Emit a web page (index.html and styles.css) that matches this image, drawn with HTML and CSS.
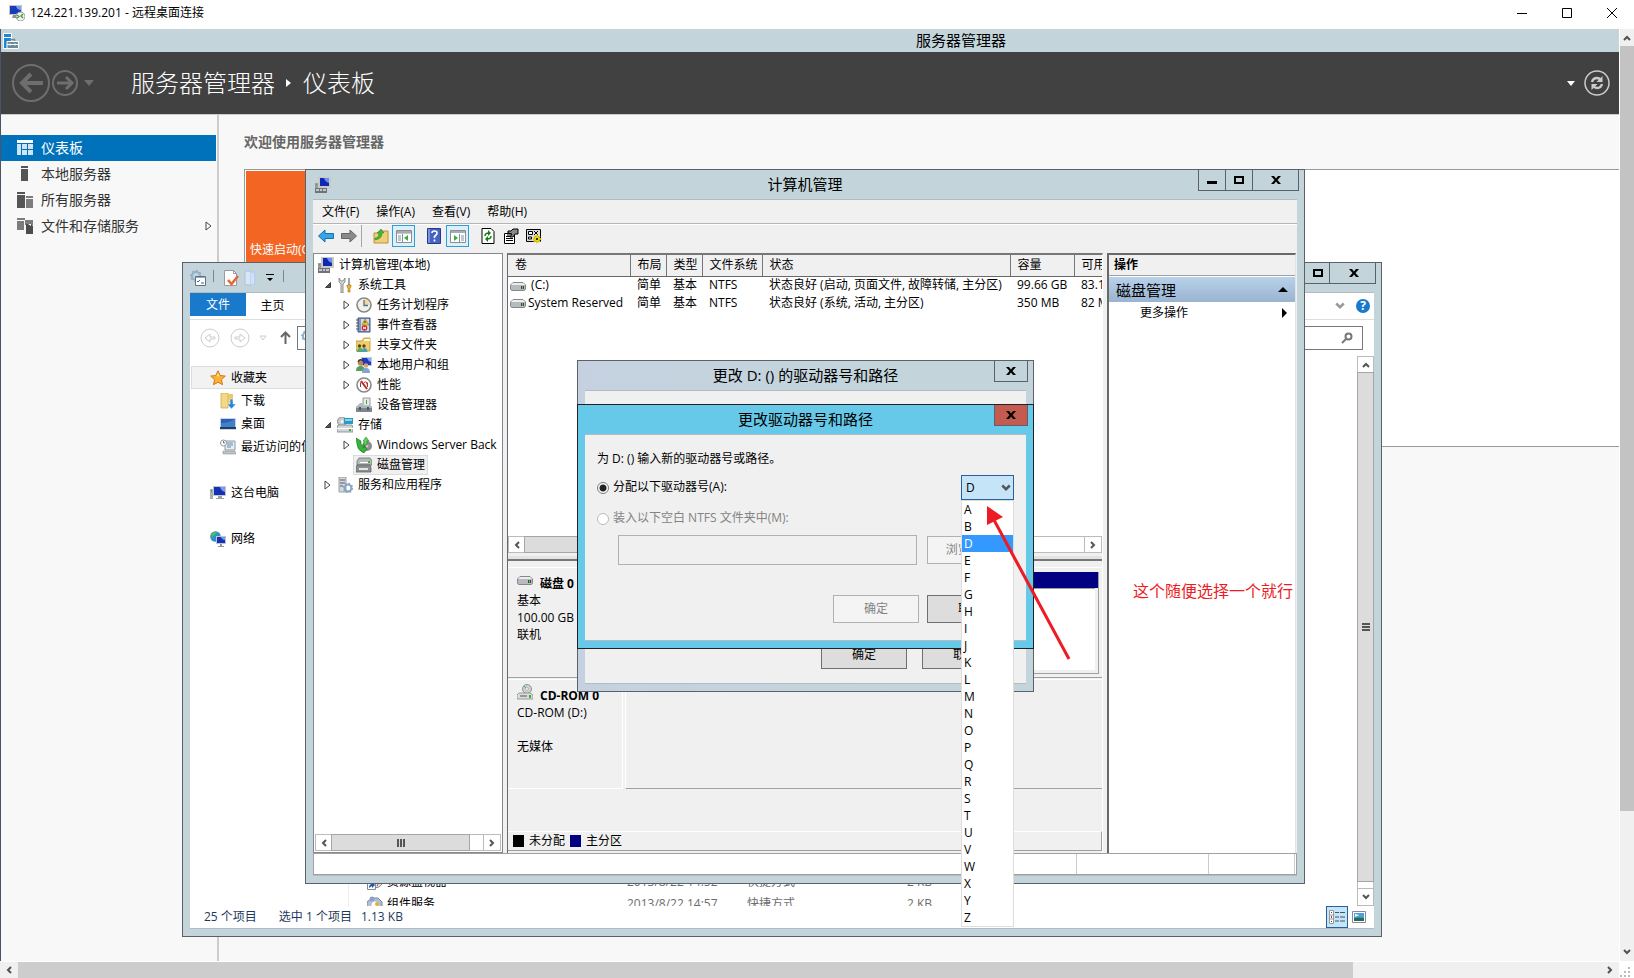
FILE: index.html
```
<!DOCTYPE html>
<html lang="zh-CN">
<head>
  <meta charset="UTF-8" />
  <meta name="viewport" content="width=device-width, initial-scale=1.0" />
  <title>124.221.139.201 - 远程桌面连接</title>
  <link rel="stylesheet" href="styles.css">
</head>
<body>
  <!-- shared icons -->
  <svg class="sprite" aria-hidden="true">
    <symbol id="i-pc" viewBox="0 0 16 16">
      <path d="M0 6h3v5H0z" fill="#9a9a9a" /><path d="M1 7h1v1H1z" fill="#3a3" />
      <path d="M3 0h13v11H3z" fill="#c9c9c4" /><path d="M5 1h9v8H5z" fill="#1226b4" />
      <path d="M9 1h5v5q-4-1-5-5z" fill="#6f8df2" />
      <path d="M0 11h12v5H0z" fill="#6f7478" /><path d="M1 12h3v2H1zM5 12h2v2H5zM8 12h3v2H8z" fill="#c4c8ca" />
    </symbol>
    <symbol id="i-monitor" viewBox="0 0 16 16">
      <path d="M0 4h3v10H0z" fill="#a7b0b6" /><path d="M1 5h1v2H1z" fill="#4a4" />
      <path d="M3 1h13v10H3z" fill="#c2c8cc" /><path d="M4 2h11v8H4z" fill="#1530b8" />
      <path d="M10 2h5v5q-4-1-5-5z" fill="#7c9bf0" /><path d="M8 11h4v2h2v1H6v-1h2z" fill="#9aa2a6" />
    </symbol>
    <symbol id="i-rdp" viewBox="0 0 16 16">
      <path d="M0 0h13v10H0z" fill="#c3c8cc" /><path d="M1 1h11v8H1z" fill="#1a3cb8" /><path d="M7 1h5v4q-4 0-5-4z" fill="#7ba0f0" />
      <path d="M4 10h4v3H3z" fill="#8d9499" /><circle cx="11.500" cy="11.500" r="4.500" fill="#eef2ee" stroke="#999" />
      <path d="M8 10l2 1.500L8 13M14 9l-2 2 2 2" fill="none" stroke="#3a9a3a" stroke-width="1.300" />
    </symbol>
    <symbol id="i-server" viewBox="0 0 16 16">
      <path d="M.5.500h8v15h-8z" fill="#1b87d6" stroke="#fff" /><path d="M1 4h7v1H1z" fill="#fff" />
      <path d="M4 8.500h11.500v7H4z" fill="#6d8b9b" stroke="#fff" /><path d="M7.500 8V6.500h4V8" fill="none" stroke="#6d8b9b" stroke-width="1.500" />
      <path d="M4 11.500h11M7 10.500v2M12 10.500v2" stroke="#fff" />
    </symbol>
    <symbol id="i-tools" viewBox="0 0 16 16">
      <path d="M2 1v4l2 2v9h2V7l2-2V1L6 4H4z" fill="#d4d8da" stroke="#777" stroke-width=".8" />
      <path d="M11 1h2v7h-2z" fill="#a5a5a5" /><path d="M10 8h4v2l-1 1v4h-2v-4l-1-1z" fill="#efb02c" stroke="#a87414" stroke-width=".6" />
    </symbol>
    <symbol id="i-clock" viewBox="0 0 16 16">
      <circle cx="8" cy="8" r="7" fill="#f1f1ec" stroke="#888" stroke-width="1.600" /><path d="M8 8V2a6 6 0 0 1 6 6z" fill="#f5d69a" />
      <path d="M8 3v5.500h4" fill="none" stroke="#52718c" stroke-width="1.300" />
    </symbol>
    <symbol id="i-event" viewBox="0 0 16 16">
      <path d="M2 1h12v14H2z" fill="#7f98c4" stroke="#41547c" /><path d="M5 2h8v12H5z" fill="#cfdaf0" />
      <path d="M0 3h3M0 6h3M0 9h3M0 12h3" stroke="#555" /><path d="M9 2l4 6H6z" fill="#f1c730" stroke="#8b6b00" stroke-width=".6" />
      <path d="M9 4v2" stroke="#222" /><circle cx="8.500" cy="11" r="2.800" fill="#d42020" /><path d="M7 10l3 2M10 10l-3 2" stroke="#fff" />
    </symbol>
    <symbol id="i-share" viewBox="0 0 16 16">
      <path d="M0 4h6l2-3h6v13H0z" fill="#f0cf6a" stroke="#b78f31" stroke-width=".8" /><path d="M8 2h6v2H8z" fill="#fff7d7" />
      <circle cx="3.500" cy="9" r="1.700" fill="#5b432a" /><circle cx="8" cy="9" r="1.700" fill="#5b432a" />
      <path d="M1 15q0-4 3-4t3 4z" fill="#58a868" /><path d="M6 15q0-4 2.500-4t3 4z" fill="#4aa0b8" />
    </symbol>
    <symbol id="i-users" viewBox="0 0 16 16">
      <path d="M5 0h11v9H5z" fill="#c6cbd0" /><path d="M6 1h9v7H6z" fill="#1b3cc0" /><path d="M11 1h4v4q-3-1-4-4z" fill="#86a4f4" />
      <circle cx="4.500" cy="6" r="2.700" fill="#b98a55" /><path d="M2 5q2-4 5-1" stroke="#44311c" fill="none" stroke-width="1.500" /><path d="M0 14q0-5 4.500-5T9 14z" fill="#5b9b5b" />
      <circle cx="10" cy="8.500" r="2.300" fill="#d7a46e" /><path d="M6 16q0-5 4-5t4 5z" fill="#7ea5d6" />
    </symbol>
    <symbol id="i-perf" viewBox="0 0 16 16">
      <circle cx="8" cy="8" r="7" fill="#fff" stroke="#888" stroke-width="1.600" /><path d="M4.500 10V5.500M11.500 5.500V10" fill="none" stroke="#555" />
      <path d="M5 4l6 8" stroke="#d02020" stroke-width="2" /><path d="M8 5.500q3-2 3 2" fill="none" stroke="#d02020" />
    </symbol>
    <symbol id="i-device" viewBox="0 0 16 16">
      <path d="M7 1h7v8H7z" fill="#e6e8e6" stroke="#999" /><path d="M10 3h1v4h-1z" fill="#46a546" />
      <path d="M1 9l3-3h4v3z" fill="#b6bbbf" /><path d="M0 9h16v6H0z" fill="#7b858c" /><path d="M0 9h16v2H0z" fill="#aeb6ba" /><path d="M3 10h2v3H3zM11 10h2v3h-2z" fill="#4d565b" />
    </symbol>
    <symbol id="i-storage" viewBox="0 0 16 16">
      <circle cx="5" cy="4.500" r="4.500" fill="#c9cccc" stroke="#8b8f90" /><circle cx="5" cy="4.500" r="1.300" fill="#fff" />
      <path d="M7 1h9v6H7z" fill="#2b9bc4" /><path d="M8 2h7v2H8z" fill="#88d4ec" />
      <path d="M1 8h14l1 3v4H0v-4z" fill="#d2d5d7" stroke="#7d8386" stroke-width=".8" /><path d="M0 11.500h16" stroke="#fff" /><path d="M12 12h2v2h-2z" fill="#3cae32" />
    </symbol>
    <symbol id="i-backup" viewBox="0 0 16 16">
      <circle cx="11" cy="9" r="5" fill="#8c8c8c" /><circle cx="11" cy="9" r="1.500" fill="#e6c0c0" />
      <path d="M0 1l5 3v3l3 4V8l3 4-3 4-2-1q-5-3-5-8z" fill="#33b43a" stroke="#167319" stroke-width=".6" /><path d="M7 4l3-4 3 4h-2v4H8V4z" fill="#5fd25f" stroke="#167319" stroke-width=".5" />
    </symbol>
    <symbol id="i-disks" viewBox="0 0 16 16">
      <path d="M3 1h11l2 3v4H1V4z" fill="#b5b9ba" stroke="#6a6e70" stroke-width=".8" /><path d="M4 5h8v1H4z" fill="#fff" /><path d="M12 4h2v2h-2z" fill="#3cae32" />
      <path d="M1 8h13l1 3v4H0v-4z" fill="#8b8f91" stroke="#5c6062" stroke-width=".8" /><path d="M3 11h9v2H3z" fill="#e5e7e7" />
    </symbol>
    <symbol id="i-services" viewBox="0 0 16 16">
      <path d="M2 0h7v15H2z" fill="#d5d9dc" stroke="#858b8f" stroke-width=".8" /><path d="M3 3h5M3 6h5M3 9h3" stroke="#557" />
      <circle cx="11" cy="11" r="3.400" fill="none" stroke="#88a5c5" stroke-width="2" /><circle cx="11" cy="11" r="4.500" fill="none" stroke="#88a5c5" stroke-width="1.500" stroke-dasharray="1.700 1.800" />
    </symbol>
    <symbol id="i-drive" viewBox="0 0 16 9">
      <path d="M3 .5h10l2.500 2.500v4l-1 1.500h-13L.5 7V3z" fill="#b8babd" stroke="#85878b" /><path d="M3 1h10l2 2H1z" fill="#ededf0" /><path d="M11 4h3v3h-3z" fill="#444" /><path d="M12 4h1v3h-1z" fill="#4dcb3b" />
    </symbol>
    <symbol id="i-cd" viewBox="0 0 16 16">
      <circle cx="10" cy="5" r="4.500" fill="#cfd2d2" stroke="#8e9292" /><circle cx="10" cy="5" r="1.400" fill="#fff" stroke="#999" stroke-width=".6" /><path d="M7 2l2 2" stroke="#4b4" />
      <path d="M2 9h11l3 2v4H0v-4z" fill="#dadcdd" stroke="#85898b" stroke-width=".8" /><path d="M3 12h7" stroke="#555" /><path d="M12 11h2v3h-2z" fill="#3cae32" />
    </symbol>
    <symbol id="i-star" viewBox="0 0 16 16">
      <path d="M8 .8l2.200 4.700 5.100.6-3.800 3.500 1 5.100L8 12.200l-4.500 2.500 1-5.100L.7 6.100l5.100-.6z" fill="#f9b233" stroke="#cf7a1c" />
      <path d="M8 3l1.300 3.300H6.700z" fill="#fde5a8" />
    </symbol>
    <symbol id="i-down" viewBox="0 0 16 16">
      <path d="M1 0h7v15H1z" fill="#f3d888" stroke="#c9a54c" stroke-width=".7" /><path d="M8 1h5v12H8z" fill="#ecc766" /><path d="M10 6h3v5h3l-4.500 5L7 11h3z" fill="#2a86d8" stroke="#fff" stroke-width=".5" />
    </symbol>
    <symbol id="i-desk" viewBox="0 0 16 16">
      <path d="M0 2h16v12H0z" fill="#c9d4df" /><path d="M1 3h14v8H1z" fill="#2862b8" /><path d="M1 7q8 0 14-4v8H1z" fill="#447fcc" /><path d="M0 11h16v2H0z" fill="#21405f" />
    </symbol>
    <symbol id="i-recent" viewBox="0 0 16 16">
      <path d="M5 2h10v9H5z" fill="#e8edf0" stroke="#8f999f" /><path d="M7 4h6M7 6h6M7 8h4" stroke="#5f8cb4" /><path d="M3 12h12l1 3H3z" fill="#bcc4c8" stroke="#8f999f" stroke-width=".6" />
      <circle cx="3.500" cy="4" r="3" fill="#fff" stroke="#8f999f" /><path d="M3.500 2v2h1.500" fill="none" stroke="#555" stroke-width=".8" />
    </symbol>
    <symbol id="i-net" viewBox="0 0 16 16">
      <circle cx="5.500" cy="5.500" r="5.300" fill="#2d8fd0" /><path d="M1 3q3-3 6-2L5 4 3 5v3zM7 6l3-2v4L7 10z" fill="#4fbd53" />
      <path d="M6 5h10v8H6z" fill="#bfc7cd" /><path d="M7 6h8v6H7z" fill="#1631b4" /><path d="M11 6h4v3q-3 0-4-3z" fill="#7797ee" /><path d="M10 13h2v2h2v1H8v-1h2z" fill="#8f979b" />
    </symbol>
    <symbol id="i-opts" viewBox="0 0 16 16">
      <circle cx="6" cy="6" r="4" fill="none" stroke="#8fb3cf" stroke-width="2" /><circle cx="6" cy="6" r="5.300" fill="none" stroke="#7c98ae" stroke-dasharray="2 2" />
      <path d="M5.500 6.500h10v9h-10z" fill="#fff" stroke="#66727a" /><path d="M6 7h9v1H6z" fill="#9ab" /><path d="M7 11l1 1 2-2M11 13h3" fill="none" stroke="#1f6ec0" />
    </symbol>
    <symbol id="i-check" viewBox="0 0 16 16">
      <path d="M1.500.500h9l3 3v12h-12z" fill="#fff" stroke="#9a9a9a" /><path d="M10.500.500v3h3" fill="none" stroke="#9a9a9a" /><path d="M5 10l3.500 4L15 6" fill="none" stroke="#e8673a" stroke-width="2.600" />
    </symbol>
    <symbol id="i-newfolder" viewBox="0 0 16 16">
      <path d="M2 1h6v14H2z" fill="#d9e6f8" stroke="#a9c0dd" /><path d="M8 1h5v14H8z" fill="#b9cfec" /><path d="M8 3h3v11H8z" fill="#d0e0f5" />
    </symbol>
    <symbol id="i-caret" viewBox="0 0 8 10"><path d="M1 1l5 4-5 4z" fill="#fff" stroke="#444" /></symbol>
    <symbol id="i-caret-open" viewBox="0 0 8 8"><path d="M6.500 1.500v5h-5z" fill="#555" stroke="#222" stroke-width=".8" /></symbol>
    <symbol id="i-x" viewBox="0 0 10 8"><path d="M0 0h3l2 2.500L7 0h3L6.500 4 10 8H7L5 5.500 3 8H0l3.500-4z" fill="#000" /></symbol>
    <symbol id="i-max" viewBox="0 0 10 8"><path d="M1 1h8v6H1z" fill="none" stroke="#000" stroke-width="2" /></symbol>
    <symbol id="i-chev" viewBox="0 0 8 8"><path d="M1 2l3 3 3-3" fill="none" stroke="currentColor" stroke-width="2" /></symbol>
    <symbol id="i-shortcut" viewBox="0 0 16 16">
      <circle cx="9" cy="7" r="6.500" fill="#eee" stroke="#777" /><path d="M.5 7.500h8v8h-8z" fill="#fff" stroke="#888" /><path d="M2 14q0-4 3-4V8l3 3-3 3v-2z" fill="#1a56b0" /><path d="M10 12l3-5" stroke="#c33" />
    </symbol>
    <symbol id="i-component" viewBox="0 0 16 16">
      <path d="M0 6l5-4h6l4 4v8H0z" fill="#aebfd6" stroke="#7385a3" /><circle cx="5" cy="3" r="2.500" fill="#8f9fc8" /><circle cx="8" cy="9" r="3.500" fill="#fff" /><circle cx="10" cy="8" r="2" fill="#e2b12c" /><circle cx="14" cy="13" r="2" fill="#4aa34a" />
    </symbol>
  </svg>

  <div class="rdp">
    <header class="rdp-title">
      <svg class="icon"><use href="#i-rdp" /></svg>
      <span>124.221.139.201 - 远程桌面连接</span>
      <div class="rdp-buttons">
        <button aria-label="最小化"><svg width="12" height="12"><path d="M1 6.500h10" stroke="#000" /></svg></button>
        <button aria-label="最大化"><svg width="12" height="12"><path d="M1.500 1.500h9v9h-9z" fill="none" stroke="#000" /></svg></button>
        <button aria-label="关闭"><svg width="12" height="12"><path d="M1 1l10 10M11 1L1 11" stroke="#000" /></svg></button>
      </div>
    </header>

    <div class="desktop">
      <!-- server manager -->
      <div class="sm-title"><svg class="icon"><use href="#i-server" /></svg><span>服务器管理器</span></div>
      <div class="sm-header">
        <svg class="sm-nav" width="86" height="40" fill="none" stroke="#6e6e6e">
          <circle cx="19" cy="20" r="18" stroke-width="2" /><path d="M31 20H11M19 11l-9 9 9 9" stroke-width="4" />
          <circle cx="53" cy="20" r="12" stroke-width="2" /><path d="M45 20h14M54 14l6 6-6 6" stroke-width="3" />
          <path d="M72 17h10l-5 6z" fill="#6e6e6e" stroke="none" />
        </svg>
        <h1>服务器管理器<svg width="6" height="8"><path d="M0 0l5 4-5 4z" fill="#fff" /></svg>仪表板</h1>
        <div class="sm-refresh">
          <svg width="8" height="5"><path d="M0 0h8L4 5z" fill="#fff" /></svg>
          <svg width="26" height="26" fill="none" stroke="#ccc">
            <circle cx="13" cy="13" r="12" stroke-width="1.500" /><path d="M8 12q1-4 5-4 2 0 4 2M18 14q-1 4-5 4-2 0-4-2" stroke-width="2.400" />
            <path d="M18.500 6v6h-6zM7.500 20v-6h6z" fill="#ccc" stroke="none" />
          </svg>
        </div>
      </div>
      <div class="sm-body">
        <nav class="sm-side">
          <a href="#" class="active"><svg class="icon"><path d="M0 0h16v3H0z" fill="#fff" /><path d="M0 4h4v11H0zM5 4h5v5H5zM11 4h5v5h-5zM5 10h5v5H5zM11 10h5v5h-5z" fill="#cfe5f5" /></svg>仪表板</a>
          <a href="#"><svg class="icon"><path d="M4 0h7v2H4zM4 3h7v12H4z" fill="#555" /></svg>本地服务器</a>
          <a href="#"><svg class="icon"><path d="M0 0h8v2H0zM0 3h8v13H0z" fill="#555" /><path d="M9 4h7v2H9zM9 7h7v9H9z" fill="#7c7c7c" /></svg>所有服务器</a>
          <a href="#"><svg class="icon"><path d="M0 0h8v2H0zM0 3h7v9H0z" fill="#7c7c7c" /><path d="M8 2h8v5H8z" fill="#7c7c7c" /><path d="M9 6h5l2 2v8H9z" fill="#4d4d4d" /><path d="M11 6h3v2z" fill="#fff" /></svg>文件和存储服务<svg class="more" width="8" height="10"><use href="#i-caret" /></svg></a>
        </nav>
        <main class="sm-main">
          <h2>欢迎使用服务器管理器</h2>
          <div class="welcome"><div class="quick">快速启动(Q)</div></div>
        </main>
      </div>

      <!-- explorer -->
      <section class="window explorer">
        <div class="window-title quick-bar">
          <svg class="icon"><use href="#i-opts" /></svg><i></i>
          <svg class="icon"><use href="#i-check" /></svg>
          <svg class="icon"><use href="#i-newfolder" /></svg>
          <svg width="8" height="8"><path d="M0 0h8v1H0zM1 4h6L4 7z" fill="#000" /></svg><i></i>
          <div class="controls">
            <button aria-label="最大化"><svg width="10" height="8"><use href="#i-max" /></svg></button>
            <button class="close" aria-label="关闭"><svg width="10" height="8"><use href="#i-x" /></svg></button>
          </div>
        </div>
        <div class="client">
          <div class="tabs">
            <button class="file-tab">文件</button><button>主页</button>
            <div class="tabs-right"><svg class="fold" width="10" height="10" viewBox="0 0 8 8"><use href="#i-chev" /></svg><span class="help">?</span></div>
          </div>
          <div class="address">
            <svg width="92" height="20" fill="none" stroke="#ccc">
              <circle cx="10" cy="10" r="9" /><path d="M15 9h-5V6l-5 4 5 4v-3h5z" />
              <circle cx="40" cy="10" r="9" /><path d="M35 9h5V6l5 4-5 4v-3h-5z" /><path d="M60 8h6l-3 4z" />
              <path d="M85.500 16V5M81 9l4.500-4.500L90 9" stroke="#666" stroke-width="2" />
            </svg>
            <div class="path"><svg class="icon"><use href="#i-opts" /></svg></div>
            <div class="search"><svg width="12" height="12" fill="none" stroke="#777"><circle cx="7.500" cy="4.500" r="3" stroke-width="2" /><path d="M5 7l-4 4" stroke-width="2" /></svg></div>
          </div>
          <div class="ex-body">
            <div class="ex-nav">
              <a href="#" class="fav"><svg class="icon"><use href="#i-star" /></svg>收藏夹</a>
              <a href="#" class="sub"><svg class="icon"><use href="#i-down" /></svg>下载</a>
              <a href="#" class="sub"><svg class="icon"><use href="#i-desk" /></svg>桌面</a>
              <a href="#" class="sub"><svg class="icon"><use href="#i-recent" /></svg>最近访问的位置</a>
              <a href="#" class="group"><svg class="icon"><use href="#i-monitor" /></svg>这台电脑</a>
              <a href="#" class="group"><svg class="icon"><use href="#i-net" /></svg>网络</a>
            </div>
            <div class="ex-files">
              <table>
                <tr><td><svg class="icon"><use href="#i-shortcut" /></svg>资源监视器</td><td>2013/8/22 14:52</td><td>快捷方式</td><td>2 KB</td></tr>
                <tr><td><svg class="icon"><use href="#i-component" /></svg>组件服务</td><td>2013/8/22 14:57</td><td>快捷方式</td><td>2 KB</td></tr>
              </table>
            </div>
            <div class="vbar">
              <button aria-label="向上"><svg class="up" width="8" height="8"><use href="#i-chev" /></svg></button>
              <div class="thumb"><svg width="8" height="8"><path d="M0 1h8M0 4h8M0 7h8" stroke="#555" stroke-width="2" /></svg></div>
              <div class="rest"></div>
              <button aria-label="向下"><svg width="8" height="8"><use href="#i-chev" /></svg></button>
            </div>
          </div>
          <div class="ex-status">
            <span>25 个项目</span><span>选中 1 个项目</span><span>1.13 KB</span>
            <div class="views">
              <button class="on" aria-label="详细信息"><svg width="16" height="14"><path d="M.5.500h4v13h-4zM.5 5h4M.5 9h4" fill="#fff" stroke="#999" /><path d="M2 2h1v1H2zM2 11h1v1H2z" fill="#345" /><path d="M2 6h1v2H2z" fill="#c22" /><path d="M6 2.500h4M11 2.500h5M6 7h4M11 7h5M6 11h4M11 11h5" stroke="#456" /></svg></button>
              <button aria-label="大图标"><svg width="14" height="12"><path d="M.5.500h13v11H.5z" fill="#fff" stroke="#889" /><path d="M2 2h10v8H2z" fill="#4ba3dc" /><path d="M2 7q5-1 10 0v3H2z" fill="#2d6a55" /><path d="M3 3l4 1-4 2z" fill="#fff" /></svg></button>
            </div>
          </div>
        </div>
      </section>

      <!-- computer management -->
      <section class="window mmc">
        <div class="window-title">
          <svg class="icon app"><use href="#i-pc" /></svg>
          <span>计算机管理</span>
          <div class="controls">
            <button aria-label="最小化"><svg width="10" height="8"><path d="M0 5h10v3H0z" /></svg></button>
            <button aria-label="最大化"><svg width="10" height="8"><use href="#i-max" /></svg></button>
            <button class="close" aria-label="关闭"><svg width="10" height="8"><use href="#i-x" /></svg></button>
          </div>
        </div>
        <div class="client">
          <div class="menu"><button>文件(F)</button><button>操作(A)</button><button>查看(V)</button><button>帮助(H)</button></div>
          <div class="toolbar">
            <button aria-label="后退"><svg class="icon"><path d="M.5 8L7 2v3.500h8.500v5H7V14z" fill="#35a6e6" stroke="#1b6ea8" /></svg></button>
            <button aria-label="前进"><svg class="icon"><path d="M15.500 8L9 2v3.500H.5v5H9V14z" fill="#8a8a8a" stroke="#666" /></svg></button>
            <i></i>
            <button aria-label="上移"><svg class="icon"><path d="M1 5h6l2-2h6v12H1z" fill="#efcf78" stroke="#b9923d" /><path d="M2 10q4 0 4-5H4l4-4 3 4H9q0 6-7 7z" fill="#44b53a" stroke="#27801f" stroke-width=".5" /></svg></button>
            <button class="on" aria-label="显示树"><svg class="icon"><path d="M.5 2.500h15v12H.5zM1 5h15" fill="#fff" stroke="#8b8f94" /><path d="M1 3h14v2H1z" fill="#a5acb3" /><path d="M6.500 6v8M2 8h3M2 10h3M2 12h3" stroke="#8090a0" /><path d="M12 7v6l-4-3z" fill="#3fab35" /></svg></button>
            <button class="gap" aria-label="帮助"><svg class="icon"><path d="M1.500.500h13v15h-13z" fill="#4563c0" stroke="#26398a" /><path d="M2 1h2v14H2z" fill="#7b93dc" /><path d="M6 5q0-2 2.500-2T11 5q0 1.500-1.500 2.500T8.500 10M8.500 11.500v2" fill="none" stroke="#fff" stroke-width="1.700" /></svg></button>
            <button class="on" aria-label="操作窗格"><svg class="icon"><path d="M.5 2.500h15v12H.5z" fill="#fff" stroke="#8b8f94" /><path d="M1 3h14v2H1z" fill="#a5acb3" /><path d="M9.500 6v8M11 8h3M11 10h3M11 12h3" stroke="#8090a0" /><path d="M4 7v6l4-3z" fill="#3fab35" /></svg></button>
            <button class="gap" aria-label="刷新"><svg class="icon"><path d="M2 .5h9l3 3v12H2z" fill="#fff" stroke="#000" /><path d="M5 8q0-3 4-3M11 8q0 3-4 3" fill="none" stroke="#108010" stroke-width="1.500" /><path d="M8 2l3 3-3 3zM8 8l-3 3 3 3z" fill="#108010" /></svg></button>
            <button aria-label="属性"><svg class="icon"><path d="M1.500 5.500h10v10h-10z" fill="#fff" stroke="#000" /><path d="M3 8.500h7M3 10.500h7M3 12.500h7M4 7h6" stroke="#000" /><path d="M5 3h3l2-2h5v5h-3l-2 3H7l2-3-4-1z" fill="#888" stroke="#000" /></svg></button>
            <button aria-label="设置"><svg class="icon"><path d="M.5 1.500h14v12H.5z" fill="#ddd" stroke="#000" /><path d="M2.500 3.500h4v3h-4zM2.500 9h3v2h-3z" fill="#fff" stroke="#000" /><path d="M8 3l4 4M12 3L8 7" stroke="#000" /><circle cx="11" cy="11" r="3" fill="#f0e020" stroke="#8d8500" /><path d="M11 6.500v9M6.500 11h9M8 8l6 6M14 8l-6 6" stroke="#e6d51c" stroke-width="1.500" /><circle cx="11" cy="11" r="1" /></svg></button>
          </div>
          <div class="panes">
            <div class="tree">
              <ul>
                <li class="l0"><span><svg class="icon"><use href="#i-pc" /></svg>计算机管理(本地)</span></li>
                <li class="l1"><b><svg width="8" height="8"><use href="#i-caret-open" /></svg></b><span><svg class="icon"><use href="#i-tools" /></svg>系统工具</span></li>
                <li class="l2"><b><svg width="8" height="10"><use href="#i-caret" /></svg></b><span><svg class="icon"><use href="#i-clock" /></svg>任务计划程序</span></li>
                <li class="l2"><b><svg width="8" height="10"><use href="#i-caret" /></svg></b><span><svg class="icon"><use href="#i-event" /></svg>事件查看器</span></li>
                <li class="l2"><b><svg width="8" height="10"><use href="#i-caret" /></svg></b><span><svg class="icon"><use href="#i-share" /></svg>共享文件夹</span></li>
                <li class="l2"><b><svg width="8" height="10"><use href="#i-caret" /></svg></b><span><svg class="icon"><use href="#i-users" /></svg>本地用户和组</span></li>
                <li class="l2"><b><svg width="8" height="10"><use href="#i-caret" /></svg></b><span><svg class="icon"><use href="#i-perf" /></svg>性能</span></li>
                <li class="l2"><b></b><span><svg class="icon"><use href="#i-device" /></svg>设备管理器</span></li>
                <li class="l1"><b><svg width="8" height="8"><use href="#i-caret-open" /></svg></b><span><svg class="icon"><use href="#i-storage" /></svg>存储</span></li>
                <li class="l2"><b><svg width="8" height="10"><use href="#i-caret" /></svg></b><span><svg class="icon"><use href="#i-backup" /></svg>Windows Server Back</span></li>
                <li class="l2"><b></b><span class="selected"><svg class="icon"><use href="#i-disks" /></svg>磁盘管理</span></li>
                <li class="l1"><b><svg width="8" height="10"><use href="#i-caret" /></svg></b><span><svg class="icon"><use href="#i-services" /></svg>服务和应用程序</span></li>
              </ul>
              <div class="hbar">
                <button aria-label="向左"><svg class="left" width="8" height="8"><use href="#i-chev" /></svg></button>
                <div class="thumb"><svg width="8" height="8"><path d="M1 0v8M4 0v8M7 0v8" stroke="#555" stroke-width="2" /></svg></div>
                <div class="rest"></div>
                <button aria-label="向右"><svg class="right" width="8" height="8"><use href="#i-chev" /></svg></button>
              </div>
            </div>

            <div class="disk-pane">
              <div class="volumes">
                <table>
                  <colgroup><col class="c-vol"><col class="c-s"><col class="c-s"><col class="c-fs"><col class="c-state"><col class="c-size"><col class="c-free"></colgroup>
                  <tr><th>卷</th><th>布局</th><th>类型</th><th>文件系统</th><th>状态</th><th>容量</th><th>可用空间</th></tr>
                  <tr><td><svg width="16" height="9"><use href="#i-drive" /></svg>&nbsp;(C:)</td><td>简单</td><td>基本</td><td>NTFS</td><td>状态良好 (启动, 页面文件, 故障转储, 主分区)</td><td>99.66 GB</td><td>83.15 GB</td></tr>
                  <tr><td><svg width="16" height="9"><use href="#i-drive" /></svg>System Reserved</td><td>简单</td><td>基本</td><td>NTFS</td><td>状态良好 (系统, 活动, 主分区)</td><td>350 MB</td><td>82 MB</td></tr>
                </table>
              </div>
              <div class="hbar">
                <button aria-label="向左"><svg class="left" width="8" height="8"><use href="#i-chev" /></svg></button>
                <div class="thumb"></div>
                <div class="rest"></div>
                <button aria-label="向右"><svg class="right" width="8" height="8"><use href="#i-chev" /></svg></button>
              </div>
              <div class="splitter"></div>
              <div class="disk">
                <div class="disk-info">
                  <h3><svg width="16" height="16" viewBox="0 -4 16 16"><use href="#i-drive" width="16" height="9" /></svg>磁盘 0</h3>
                  <p>基本</p><p>100.00 GB</p><p>联机</p>
                </div>
                <div class="partition"><div></div></div>
              </div>
              <div class="disk cdrom">
                <div class="disk-info">
                  <h3><svg width="16" height="16"><use href="#i-cd" /></svg>CD-ROM 0</h3>
                  <p>CD-ROM (D:)</p><p>&nbsp;</p><p>无媒体</p>
                </div>
                <div class="empty"></div>
              </div>
              <div class="legend"><i class="none"></i>未分配<i class="primary"></i>主分区</div>
            </div>

            <div class="actions">
              <h3>操作</h3>
              <button class="head">磁盘管理<svg width="10" height="5"><path d="M0 5h10L5 0z" /></svg></button>
              <button class="item">更多操作<svg width="5" height="10"><path d="M0 0v10l5-5z" /></svg></button>
            </div>
          </div>
          <div class="mmc-status"><div></div><div></div><div></div></div>
        </div>
      </section>

      <!-- dialogs -->
      <section class="window dialog back">
        <div class="window-title">
          <span>更改 D: () 的驱动器号和路径</span>
          <div class="controls"><button class="small-close" aria-label="关闭"><svg width="10" height="8"><use href="#i-x" /></svg></button></div>
        </div>
        <div class="client"><div class="buttons"><button class="push">确定</button><button class="push">取消</button></div></div>
      </section>

      <section class="window dialog front">
        <div class="window-title">
          <span>更改驱动器号和路径</span>
          <div class="controls"><button class="small-close red" aria-label="关闭"><svg width="10" height="8"><use href="#i-x" /></svg></button></div>
        </div>
        <form class="client">
          <p class="prompt">为 D: () 输入新的驱动器号或路径。</p>
          <div class="row">
            <input type="radio" name="mode" id="assign" checked><label for="assign">分配以下驱动器号(A):</label>
            <div class="combo">
              <select aria-label="驱动器号"><option>D</option></select>
              <svg width="10" height="10" viewBox="0 0 8 8"><use href="#i-chev" /></svg>
              <ul class="letters" role="listbox" aria-label="驱动器号列表">
                <li role="option">A</li><li role="option">B</li><li role="option" class="selected" aria-selected="true">D</li><li role="option">E</li><li role="option">F</li>
                <li role="option">G</li><li role="option">H</li><li role="option">I</li><li role="option">J</li><li role="option">K</li>
                <li role="option">L</li><li role="option">M</li><li role="option">N</li><li role="option">O</li><li role="option">P</li>
                <li role="option">Q</li><li role="option">R</li><li role="option">S</li><li role="option">T</li><li role="option">U</li>
                <li role="option">V</li><li role="option">W</li><li role="option">X</li><li role="option">Y</li><li role="option">Z</li>
              </ul>
            </div>
          </div>
          <div class="row off">
            <input type="radio" name="mode" id="mount" disabled><label for="mount">装入以下空白 NTFS 文件夹中(M):</label>
          </div>
          <div class="folder"><input type="text" aria-label="文件夹" disabled><button type="button" class="push" disabled>浏览(B)...</button></div>
          <div class="buttons"><button type="button" class="push" disabled>确定</button><button type="button" class="push">取消</button></div>
        </form>
      </section>

      <div class="note">这个随便选择一个就行</div>
      <svg class="arrow" width="86" height="158"><path d="M7 14L82 153" stroke="#ed1c24" stroke-width="3" /><path d="M0 0l16 11-16 8z" fill="#ed1c24" /></svg>
    </div>

    <div class="rdp-vbar">
      <svg class="up" width="8" height="8"><use href="#i-chev" /></svg><div></div><svg width="8" height="8"><use href="#i-chev" /></svg>
    </div>
    <div class="rdp-hbar">
      <svg class="left" width="8" height="8"><use href="#i-chev" /></svg><div></div><svg class="right" width="8" height="8"><use href="#i-chev" /></svg>
    </div>
    <svg class="grip" width="12" height="12"><path d="M9 1h2v2H9zM9 5h2v2H9zM9 9h2v2H9zM5 5h2v2H5zM5 9h2v2H5zM1 9h2v2H1z" fill="#bbb" /></svg>
  </div>
</body>
</html>
```

FILE: styles.css
```
* {
  box-sizing: border-box;
}

body {
  margin: 0;
  font-family: "Open Sans", "Noto Sans CJK SC", sans-serif;
  font-size: 12px;
  line-height: 16px;
  color: #000;
}

h1, h2, h3, p, ul {
  margin: 0;
  padding: 0;
}

ul {
  list-style: none;
}

a {
  color: inherit;
  text-decoration: none;
}

button, input, select {
  font: inherit;
  color: inherit;
  margin: 0;
  padding: 0;
  border: 0;
  background: none;
}

svg {
  flex: none;
}

.sprite {
  display: none;
}

.icon {
  width: 16px;
  height: 16px;
}

.up { transform: rotate(180deg); }
.left { transform: rotate(90deg); }
.right { transform: rotate(-90deg); }

/* remote desktop frame */
.rdp {
  display: grid;
  grid-template: 29px 1fr 17px / 1fr 15px;
  height: 100vh;
  overflow: hidden;
  background: #fff;
}

.rdp-title {
  grid-column: 1 / 3;
  display: flex;
  align-items: center;
  gap: 5px;
  padding: 0 0 3px 9px;
}

.rdp-buttons {
  display: flex;
  margin-left: auto;
}

.rdp-buttons button {
  width: 45px;
  height: 26px;
  display: flex;
  align-items: center;
  justify-content: center;
}

.rdp-vbar, .rdp-hbar {
  display: flex;
  align-items: center;
  justify-content: space-between;
  background: #f0f0f0;
  color: #505050;
}

.rdp-vbar {
  flex-direction: column;
  border-left: 1px solid #fff;
  padding: 5px 0;
}

.rdp-vbar div {
  width: 100%;
  height: 83%;
  margin: 4px 0 auto;
  background: #c3c3c3;
}

.rdp-hbar {
  border-top: 1px solid #fff;
  padding: 0 5px;
}

.rdp-hbar div {
  width: 83%;
  height: 100%;
  margin: 0 auto 0 5px;
  background: #cdcdcd;
}

.grip {
  align-self: end;
}

.desktop {
  position: relative;
  display: flex;
  flex-direction: column;
  overflow: hidden;
  border-left: 1px solid #4b5568;
  background: #f8f8f8;
}

/* server manager */
.sm-title {
  display: flex;
  align-items: center;
  height: 23px;
  padding-left: 2px;
  background: #c3d5db;
  font-size: 15px;
}

.sm-title span {
  flex: 1;
  padding: 0 0 2px 284px;
  text-align: center;
}

.sm-header {
  display: flex;
  align-items: center;
  height: 63px;
  padding: 0 9px 0 11px;
  background: #414141;
  border-bottom: 1px solid #ccc;
  color: #fff;
}

.sm-header h1 {
  display: flex;
  align-items: center;
  gap: 11px;
  margin-left: 33px;
  font-size: 24px;
  font-weight: 300;
  line-height: 32px;
}

.sm-refresh {
  display: flex;
  align-items: center;
  gap: 9px;
  margin-left: auto;
}

.sm-body {
  flex: 1;
  display: flex;
}

.sm-side {
  width: 218px;
  padding: 20px 1px 0 0;
  border-right: 2px solid #ccc;
  flex: none;
}

.sm-side a {
  display: flex;
  align-items: center;
  gap: 8px;
  height: 26px;
  padding: 0 3px 0 16px;
  font-size: 14px;
  color: #333;
}

.sm-side a.active {
  background: #0072bc;
  color: #fff;
}

.sm-side .more {
  margin-left: auto;
}

.sm-main {
  flex: 1;
  padding: 16px 0 0 25px;
}

.sm-main h2 {
  font-size: 14px;
  line-height: 22px;
  color: #666;
}

.welcome {
  height: 278px;
  margin-top: 16px;
  padding: 1px;
  border: 1px solid #999;
  border-right: 0;
  background: #fff;
}

.quick {
  display: flex;
  align-items: flex-end;
  width: 200px;
  height: 91px;
  padding: 0 4px 4px;
  background: #f36523;
  color: #fff;
}

/* windows */
.window {
  position: absolute;
  display: flex;
  flex-direction: column;
  padding: 0 7px 7px;
  border: 1px solid #5b6168;
  background: #c3d5db;
}

.window-title {
  display: flex;
  align-items: center;
  flex: none;
  height: 29px;
  position: relative;
  font-size: 15px;
}

.window-title span {
  flex: 1;
  padding-bottom: 2px;
  text-align: center;
}

.window-title .app {
  margin: 0 -18px 0 2px;
}

.controls {
  position: absolute;
  top: 0;
  right: -2px;
  display: flex;
  border: 1px solid #5b6168;
  border-top: 0;
}

.controls button {
  width: 27px;
  height: 20px;
  display: flex;
  align-items: center;
  justify-content: center;
  border-right: 1px solid #5b6168;
}

.controls .close {
  width: 45px;
  border-right: 0;
}

.controls .small-close {
  width: 32px;
  border-right: 0;
}

.controls .red {
  background: #c35b51;
}

.client {
  flex: 1;
  min-height: 0;
  display: flex;
  flex-direction: column;
  border-top: 1px solid #b0bcc2;
  border-bottom: 1px solid #b0bcc2;
  background: #f0f0f0;
}

.hbar, .vbar {
  display: flex;
  flex: none;
  color: #555;
  background: #fff;
}

.hbar {
  height: 17px;
  border: 1px solid #bbb;
}

.vbar {
  flex-direction: column;
  width: 17px;
  border: 1px solid #bbb;
}

.hbar button, .vbar button, .thumb {
  display: flex;
  align-items: center;
  justify-content: center;
}

.hbar button {
  width: 16px;
}

.vbar button {
  height: 16px;
}

.thumb {
  flex: 1;
  background: #dcdcdc;
  outline: 1px solid #a6a6a6;
}

.hbar .rest {
  width: 15px;
  border-right: 1px solid #bbb;
}

.disk-pane .hbar .rest {
  width: 80px;
}

.vbar .rest {
  height: 8px;
  border-bottom: 1px solid #bbb;
}

/* explorer */
.explorer {
  left: 181px;
  top: 233px;
  width: 1200px;
  height: 675px;
}

.explorer .client {
  background: #fff;
}

.quick-bar {
  gap: 4px;
}

.quick-bar i {
  width: 1px;
  height: 12px;
  margin: 0 5px 4px 3px;
  background: #7b868b;
}

.quick-bar svg:not([class]) {
  margin-left: 3px;
}

.quick-bar i:last-of-type {
  margin-left: 5px;
}

.tabs {
  display: flex;
  height: 27px;
  border-bottom: 1px solid #ddd;
}

.tabs button {
  width: 53px;
  height: 26px;
}

.tabs .file-tab {
  width: 56px;
  height: 23px;
  background: #1979ca;
  color: #fff;
}

.tabs-right {
  display: flex;
  align-items: center;
  gap: 11px;
  margin-left: auto;
  padding-right: 4px;
  color: #999;
}

.help {
  width: 14px;
  height: 14px;
  border-radius: 50%;
  background: #1979ca;
  color: #fff;
  font-weight: bold;
  line-height: 14px;
  text-align: center;
}

.address {
  display: flex;
  align-items: center;
  gap: 5px;
  height: 36px;
  padding: 0 11px 0 10px;
}

.path, .search {
  display: flex;
  align-items: center;
  height: 24px;
  border: 1px solid #777;
}

.path {
  flex: 1;
  padding-left: 3px;
}

.search {
  width: 200px;
  justify-content: flex-end;
  padding-right: 9px;
}

.ex-body {
  flex: 1;
  display: flex;
  min-height: 0;
}

.ex-nav {
  width: 159px;
  padding: 10px 0 0 1px;
  border-right: 1px solid #eee;
}

.ex-nav a {
  display: flex;
  align-items: center;
  gap: 5px;
  height: 23px;
  padding-left: 19px;
  white-space: nowrap;
}

.ex-nav .fav {
  background: #f2f2f2;
  border: 1px solid #dcdcdc;
  padding-left: 18px;
}

.ex-nav .sub {
  padding-left: 29px;
}

.ex-nav .group {
  margin-top: 23px;
}

.ex-files {
  flex: 1;
  display: flex;
  align-items: flex-end;
  overflow: hidden;
}

.ex-files table {
  border-collapse: collapse;
  margin: 0 0 -9px 18px;
  color: #6d6d6d;
}

.ex-files td {
  height: 22px;
  padding: 0;
  width: 120px;
}

.ex-files td:first-child {
  width: 260px;
  color: #000;
}

.ex-files td:last-child {
  width: 93px;
  text-align: right;
  padding-right: 8px;
}

.ex-files td .icon {
  margin-right: 4px;
  vertical-align: middle;
}

.ex-files td:nth-child(3) {
  width: 100px;
}

.ex-status {
  display: flex;
  align-items: center;
  height: 22px;
  padding-left: 14px;
  color: #1e395b;
}

.ex-status span {
  margin-right: 22px;
}

.ex-status span:nth-child(2) {
  margin-right: 9px;
}

.views {
  display: flex;
  margin-left: auto;
  padding-right: 4px;
}

.views button {
  display: flex;
  align-items: center;
  justify-content: center;
  width: 22px;
  height: 22px;
}

.views .on {
  background: #c5e4f7;
  border: 1px solid #26619c;
}

/* computer management */
.mmc {
  left: 304px;
  top: 140px;
  width: 1000px;
  height: 715px;
}

.menu {
  display: flex;
  gap: 17px;
  height: 24px;
  padding-left: 9px;
  border-bottom: 1px solid #b5b5b5;
}

.toolbar {
  display: flex;
  align-items: center;
  height: 29px;
  padding: 0 0 6px 1px;
  border-top: 1px solid #fff;
}

.toolbar button {
  display: flex;
  align-items: center;
  justify-content: center;
  width: 23px;
  height: 22px;
}

.toolbar i {
  width: 1px;
  height: 22px;
  margin: 0 7px 0 1px;
  background: #a6a6a6;
}

.toolbar .on {
  border: 1px solid #2b9fdc;
  background: #ddf0fa;
}

.toolbar .gap {
  margin: 0 0 0 7px;
}

.toolbar .gap + .on {
  margin-left: 1px;
}

.panes {
  flex: 1;
  display: flex;
  gap: 4px;
  min-height: 0;
  padding-right: 1px;
}

.tree {
  display: flex;
  flex-direction: column;
  width: 190px;
  flex: none;
  padding: 1px;
  border: 1px solid #828790;
  background: #fff;
}

.tree ul {
  flex: 1;
  overflow: hidden;
}

.tree li {
  display: flex;
  align-items: center;
  height: 20px;
  white-space: nowrap;
}

.tree b {
  width: 15px;
  padding-left: 2px;
  display: flex;
  align-items: center;
  flex: none;
}

.tree span {
  display: flex;
  align-items: center;
  gap: 5px;
}

.tree .selected {
  height: 20px;
  margin: 0 -3px;
  padding: 0 2px;
  border: 1px solid #dcdcdc;
  background: #f0f0f0;
}

.l0 { padding-left: 3px; }
.l1 { padding-left: 7px; }
.l2 { padding-left: 26px; }

.disk-pane {
  display: flex;
  flex-direction: column;
  flex: 1;
  min-width: 0;
  border-top: 2px solid #777;
  border-left: 1px solid #696969;
  border-right: 1px solid #fff;
}

.volumes {
  height: 281px;
  overflow: hidden;
  background: #fff;
}

.volumes table {
  table-layout: fixed;
  width: 648px;
  border-collapse: collapse;
}

.c-vol { width: 122px; }
.c-s { width: 36px; }
.c-fs { width: 60px; }
.c-state { width: 248px; }
.c-size { width: 64px; }
.c-free { width: 82px; }

.volumes th, .volumes td {
  padding: 0 0 0 7px;
  font-weight: normal;
  text-align: left;
  white-space: nowrap;
}

.volumes th {
  height: 21px;
  background: #f0f0f0;
  border-right: 1px solid #777;
  border-bottom: 1px solid #696969;
}

.volumes td {
  height: 18px;
}

.volumes td:first-child {
  padding-left: 2px;
}

.volumes td svg {
  margin-right: 2px;
  vertical-align: middle;
}

.splitter {
  height: 8px;
  flex: none;
  border-bottom: 2px solid #777;
  border-top: 3px solid #f0f0f0;
  background: #e3e3e3;
}

.disk {
  display: flex;
  flex: none;
  height: 111px;
  margin-top: 6px;
  border-top: 1px solid #fff;
  border-bottom: 1px solid #a0a0a0;
}

.disk-info {
  width: 115px;
  padding: 4px 0 0 9px;
}

.disk-info h3 {
  display: flex;
  gap: 7px;
  height: 20px;
  align-items: flex-start;
  font-size: 12px;
  line-height: 24px;
}

.disk-info p {
  line-height: 17px;
}

.partition {
  flex: 1;
  margin: 4px 3px 3px 0;
  padding-right: 3px;
  border: 1px solid #a0a0a0;
  border-top: 0;
  background: linear-gradient(#000080 16px, #f0f0f0 16px);
}

.partition div {
  height: 82px;
  margin-top: 16px;
  border-top: 1px solid #a0a0a0;
  background: #fff;
}

.cdrom {
  height: 110px;
  margin-top: 1px;
  border-bottom: 0;
}

.cdrom .disk-info {
  border-right: 1px solid #fff;
  border-bottom: 1px solid #fff;
}

.empty {
  flex: 1;
  margin-left: 2px;
  border-left: 1px solid #fff;
  border-bottom: 1px solid #a0a0a0;
}

.legend {
  display: flex;
  align-items: center;
  gap: 5px;
  height: 20px;
  margin: auto 0 2px;
  padding-left: 5px;
  border: 1px solid #a0a0a0;
  border-width: 1px 1px 1px 0;
  border-top-color: #fff;
}

.legend i {
  width: 11px;
  height: 12px;
  background: #000;
}

.legend .primary {
  background: #000080;
}

.actions {
  display: flex;
  flex-direction: column;
  width: 189px;
  flex: none;
  border-top: 2px solid #696969;
  border-left: 2px solid #696969;
  border-right: 1px solid #e3e3e3;
  background: #fff;
}

.actions h3 {
  height: 21px;
  padding: 2px 5px;
  background: #f0f0f0;
  border-bottom: 1px solid #a0a0a0;
  font-size: 12px;
}

.actions button {
  display: flex;
  align-items: center;
  justify-content: space-between;
}

.actions .head {
  height: 25px;
  margin-top: 1px;
  padding: 0 7px;
  background: linear-gradient(#b9d1ea, #99b4d1);
  font-size: 15px;
}

.actions .item {
  height: 22px;
  padding: 0 8px 0 31px;
}

.mmc-status {
  display: flex;
  justify-content: flex-end;
  height: 22px;
  border: 1px solid #a0a0a0;
  background: #fff;
}

.mmc-status div {
  width: 132px;
  border-left: 1px solid #ccc;
}

.mmc-status div:nth-child(2) {
  width: 86px;
}

.mmc-status div:last-child {
  width: 2px;
}

/* dialogs */
.dialog {
  left: 576px;
  width: 457px;
}

.back {
  top: 331px;
  height: 332px;
  background: linear-gradient(90deg, #c5d1e0, #c3d5db 70%);
}

.back .client {
  justify-content: flex-end;
}

.back .buttons {
  gap: 15px;
  padding: 0 18px 14px 0;
}

.front {
  top: 375px;
  height: 245px;
  border-color: #222;
  background: #66c9ea;
}

.buttons {
  display: flex;
  justify-content: flex-end;
  gap: 8px;
}

.push {
  width: 86px;
  height: 28px;
  border: 1px solid #707070;
  background: #ddd;
}

.push:disabled {
  border-color: #adb2b5;
  background: #f4f4f4;
  color: #838383;
}

.front .client {
  padding: 14px 12px 0;
}

.front .buttons {
  margin-right: 1px;
}

.prompt {
  line-height: 20px;
}

.row {
  display: flex;
  align-items: center;
  gap: 4px;
  height: 25px;
  margin-top: 6px;
}

.row input {
  appearance: none;
  width: 12px;
  height: 12px;
  border: 1px solid #777;
  border-radius: 50%;
  background: #fff;
}

.row input:checked {
  background: radial-gradient(#222 3px, #fff 4px);
}

.row input:disabled {
  border-color: #bbb;
}

.row label {
  padding-bottom: 1px;
}

.off {
  color: #838383;
}

.combo {
  position: relative;
  display: flex;
  align-items: center;
  margin-left: auto;
}

.combo select {
  appearance: none;
  width: 53px;
  height: 25px;
  padding-left: 4px;
  border: 1px solid #26619c;
  background: #c5e4f7;
}

.combo svg {
  position: absolute;
  right: 3px;
  color: #555;
}

.letters {
  position: absolute;
  top: 100%;
  left: 0;
  z-index: 2;
  width: 53px;
  border: 1px solid #ddd;
  background: #fff;
}

.letters li {
  height: 17px;
  padding-left: 2px;
  line-height: 17px;
}

.letters .selected {
  background: #3399ff;
  color: #fff;
}

.folder {
  display: flex;
  align-items: center;
  gap: 10px;
  height: 30px;
  margin: 4px 1px 30px 21px;
}

.folder input {
  flex: 1;
  min-width: 0;
  height: 30px;
  border: 1px solid #adb2b5;
}

/* annotation */
.note {
  position: absolute;
  left: 1132px;
  top: 550px;
  font-size: 16px;
  line-height: 24px;
  color: #ed1c24;
}

.arrow {
  position: absolute;
  left: 986px;
  top: 477px;
  z-index: 3;
}
```
